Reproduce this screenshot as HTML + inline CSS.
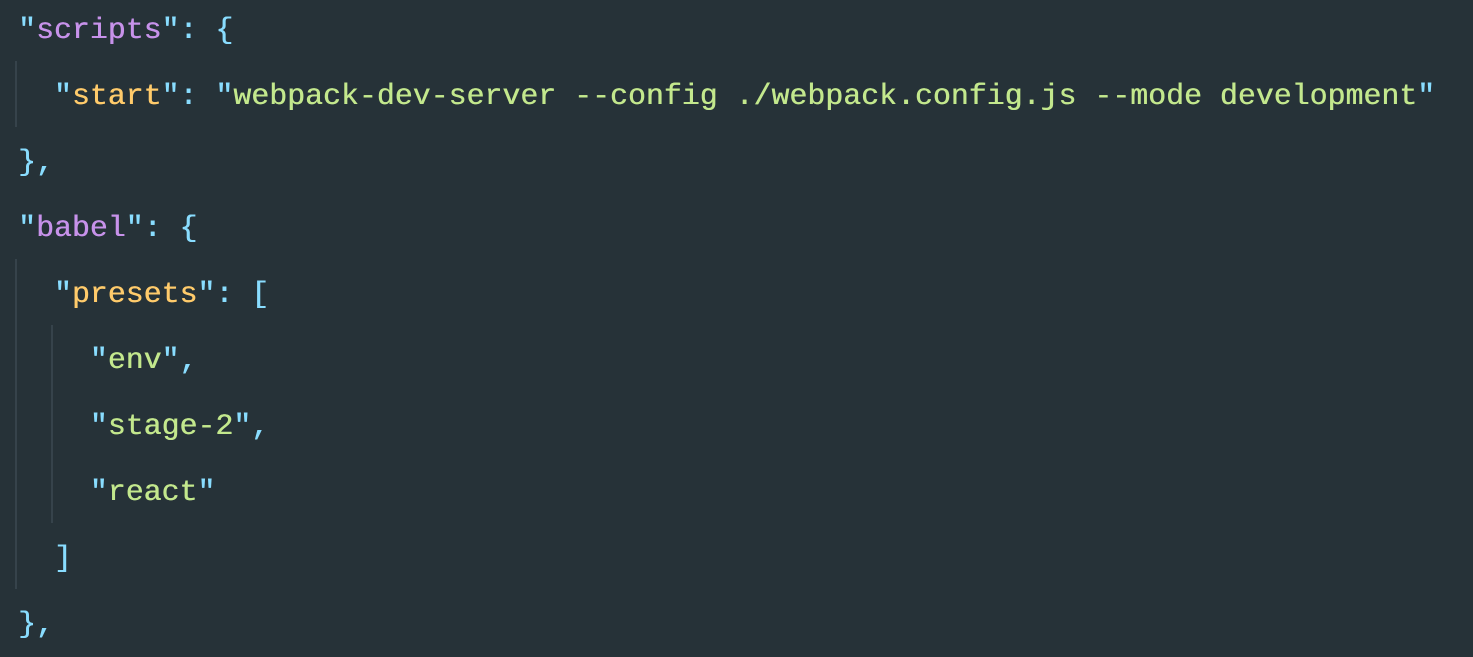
<!DOCTYPE html>
<html><head><style>
html,body{margin:0;padding:0;background:#263238;width:1473px;height:654px;overflow:hidden}
.c{position:absolute;left:18px;top:-3px;font-family:"Liberation Mono",monospace;font-size:29.9px;line-height:66px;color:#89ddff;white-space:pre;text-shadow:0.4px 0 0 currentColor}
.p{color:#c792ea}.o{color:#ffcb6b}.g{color:#c3e88d}
.gd{position:absolute;width:2px;background:#36434b}
</style></head><body>
<div class="gd" style="left:15px;top:61px;height:66px"></div>
<div class="gd" style="left:15px;top:259px;height:330px"></div>
<div class="gd" style="left:51px;top:325px;height:198px"></div>
<div class="c">"<span class="p">scripts</span>": {
  "<span class="o">start</span>": "<span class="g">webpack-dev-server --config ./webpack.config.js --mode development</span>"
},
"<span class="p">babel</span>": {
  "<span class="o">presets</span>": [
    "<span class="g">env</span>",
    "<span class="g">stage-2</span>",
    "<span class="g">react</span>"
  ]
},</div>
</body></html>
